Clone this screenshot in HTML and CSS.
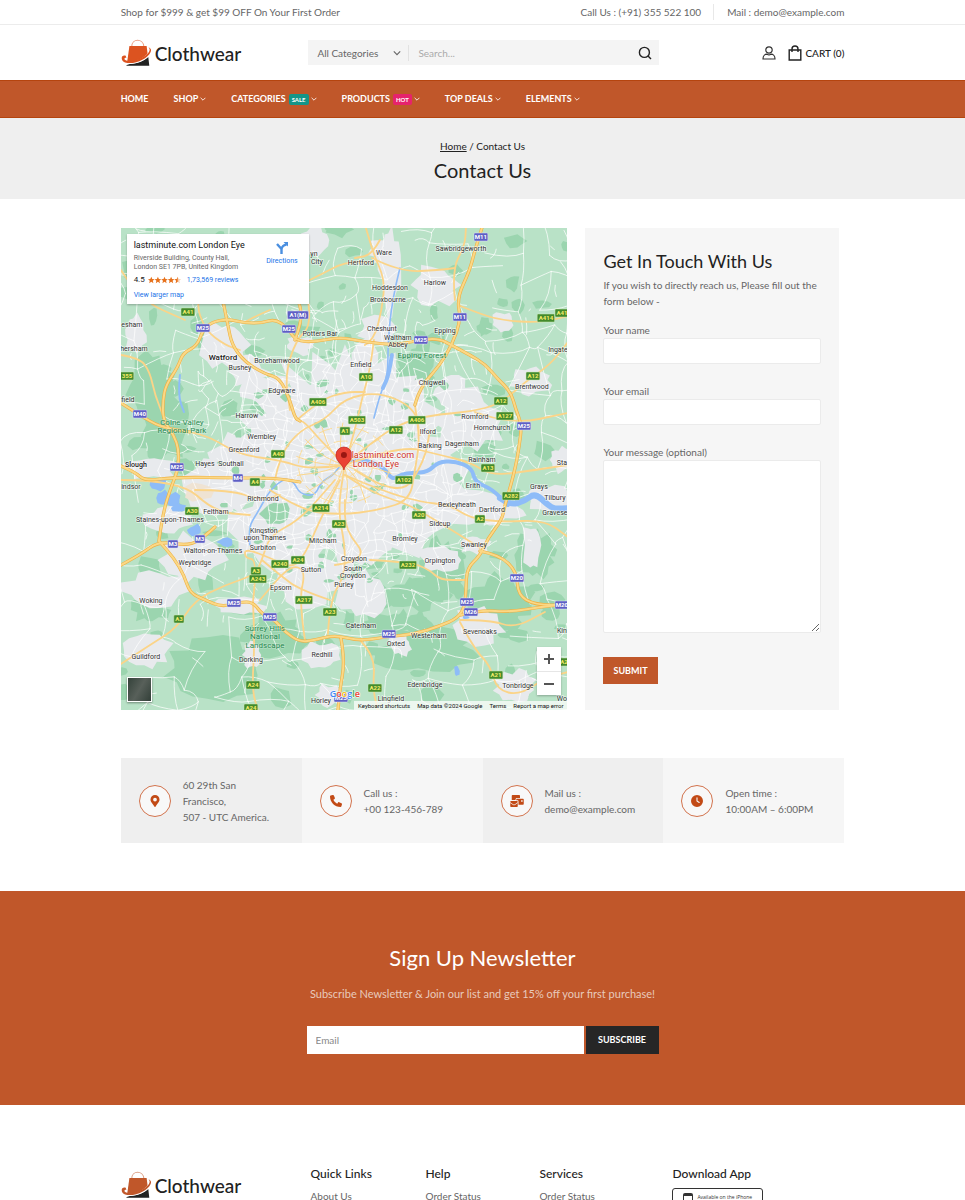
FILE: index.html
```html
<!DOCTYPE html>
<html lang="en">
<head>
<meta charset="utf-8">
<meta name="viewport" content="width=device-width, initial-scale=1">
<title>Contact Us - Clothwear</title>
<link rel="stylesheet" href="styles.css">
</head>
<body>
<svg class="sprite" aria-hidden="true">
  <symbol id="bag-logo" viewBox="30 115 95 82">
    <path d="M62 137c0-25 34-25 36 0" fill="none" stroke="currentColor" stroke-width="3" opacity=".55"/>
    <path d="M55 135h51l4 31c-15 12-34 19-62 19z" fill="currentColor"/>
    <path d="M62 188c20-2 37-9 49-20l3 26H45c3-4 9-5 17-6z" fill="#222"/>
    <path d="M45 164c-17-4-15 18-1 23 26 7 70-11 76-35 2-6-1-11-6-13 2 4 1 9-2 14-11 20-50 33-68 27-5-2-7-9 1-9z" fill="#fff"/>
    <path d="M44 164c-16-4-15 16-2 20 25 8 67-9 76-31 3-7 0-12-7-14 5 4 5 8 2 14-11 17-50 31-68 25-6-2-7-8 1-8z" fill="currentColor"/>
  </symbol>
  <symbol id="chev" viewBox="0 0 10 10"><path d="M1 3l4 4 4-4" fill="none" stroke="currentColor" stroke-width="1.4"/></symbol>
</svg>

<div class="topbar">
  <div class="container topbar-row">
    <span>Shop for $999 &amp; get $99 OFF On Your First Order</span>
    <div class="topbar-contact">
      <span>Call Us : (+91) 355 522 100</span>
      <span class="topbar-mail">Mail : demo@example.com</span>
    </div>
  </div>
</div>

<header class="container header">
  <a class="logo" href="#"><svg aria-hidden="true"><use href="#bag-logo"/></svg><span>Clothwear</span></a>
  <form class="search">
    <select aria-label="Category"><option>All Categories</option></select>
    <svg class="select-arrow" aria-hidden="true"><use href="#chev"/></svg>
    <input type="search" placeholder="Search..." aria-label="Search">
    <button type="button" aria-label="Search"><svg viewBox="0 0 14 14" width="14" height="14" fill="none" stroke="#222" stroke-width="1.4"><circle cx="6.4" cy="6.4" r="5"/><path d="M10 10l3 3"/></svg></button>
  </form>
  <div class="account">
    <a href="#" aria-label="Account"><svg viewBox="0 0 14 14" width="14" height="14" fill="none" stroke="#333" stroke-width="1.2"><circle cx="7" cy="4" r="3.2"/><path d="M1 13c0-3 2-4.800 4-4.800 1.300.8 2.700.8 4 0 2 0 4 1.800 4 4.800z"/></svg></a>
    <a class="cart" href="#"><svg viewBox="0 0 14 16" width="14" height="16" fill="none" stroke="#222" stroke-width="1.400"><path d="M1.200 5h11.600v10H1.200zM4 7V4c0-4 6-4 6 0v3"/></svg>CART (0)</a>
  </div>
</header>

<nav class="nav">
  <div class="container nav-row">
    <a href="#">HOME</a>
    <a href="#">SHOP<svg><use href="#chev"/></svg></a>
    <a href="#">CATEGORIES<span class="tag sale">SALE</span><svg><use href="#chev"/></svg></a>
    <a href="#">PRODUCTS<span class="tag hot">HOT</span><svg><use href="#chev"/></svg></a>
    <a href="#">TOP DEALS<svg><use href="#chev"/></svg></a>
    <a href="#">ELEMENTS<svg><use href="#chev"/></svg></a>
  </div>
</nav>

<section class="banner">
  <p><a href="#">Home</a> / Contact Us</p>
  <h1>Contact Us</h1>
</section>

<main class="container">
  <div class="contact">
    <div class="map">
      <svg id="map" class="map-canvas" viewBox="121 228 447 482" preserveAspectRatio="xMidYMid slice" role="img" aria-label="Map of London"></svg>
      <div class="place">
        <div class="place-text">
          <strong>lastminute.com London Eye</strong>
          <span class="place-address">Riverside Building, County Hall,<br>London SE1 7PB, United Kingdom</span>
          <span class="rating">4.5 <svg viewBox="0 0 50 10" width="33" height="8" fill="#e7711b"><path id="star" d="M5 0l1.500 3.400 3.500.3-2.700 2.400.9 3.700L5 7.800 1.800 9.800l.9-3.700L0 3.700l3.500-.3z"/><use href="#star" x="10"/><use href="#star" x="20"/><use href="#star" x="30"/><use href="#star" x="40" opacity=".35"/><path d="M45 0v7.800l-3.200 2 .9-3.700L40 3.700l3.500-.3z"/></svg> <a href="#">1,73,569 reviews</a></span>
          <a href="#">View larger map</a>
        </div>
        <a class="directions" href="#"><svg viewBox="0 0 12 12" width="12" height="12" fill="none" stroke="#4a8fe0" stroke-width="2.400"><path d="M5.500 12V7.500C5.500 5 8 3 10.500 2.500M1 2l4.500 5"/><path d="M7.500 0H12v4.500z" fill="#4a8fe0" stroke="none"/></svg>Directions</a>
      </div>
      <button class="satellite" type="button" aria-label="Satellite view"></button>
      <span class="google" aria-label="Google"><i class="b">G</i><i class="r">o</i><i class="y">o</i><i class="b">g</i><i class="g">l</i><i class="r">e</i></span>
      <div class="zoom"><button type="button" aria-label="Zoom in"><svg viewBox="0 0 12 12"><path d="M6 1v10M1 6h10"/></svg></button><button type="button" aria-label="Zoom out"><svg viewBox="0 0 12 12"><path d="M1 6h10"/></svg></button></div>
      <div class="legal"><span>Keyboard shortcuts</span><span>Map data ©2024 Google</span><span>Terms</span><span>Report a map error</span></div>
    </div>
    <form class="form">
      <h2>Get In Touch With Us</h2>
      <p>If you wish to directly reach us, Please fill out the form below -</p>
      <label for="name">Your name</label>
      <input id="name" type="text">
      <label for="email">Your email</label>
      <input id="email" type="email">
      <label for="message">Your message (optional)</label>
      <textarea id="message"></textarea>
      <button type="button">SUBMIT</button>
    </form>
  </div>

  <div class="info">
    <div class="info-item">
      <span class="ring"><svg viewBox="0 0 384 512"><path d="M172 502C27 291 0 270 0 192a192 192 0 0 1 384 0c0 78-27 99-172 310-10 13-30 13-40 0zM192 272a80 80 0 1 0 0-160 80 80 0 0 0 0 160z"/></svg></span>
      <p>60 29th San Francisco,<br>507 - UTC America.</p>
    </div>
    <div class="info-item">
      <span class="ring"><svg viewBox="0 0 512 512"><path d="M165 25c-8-19-29-29-48-24L29 25C12 30 0 46 0 64c0 247 201 448 448 448 18 0 34-12 39-29l24-88c5-19-5-40-24-48l-96-40c-16-7-35-2-46 12l-40 49c-71-33-128-90-161-161l49-40c14-11 19-30 12-46z"/></svg></span>
      <p>Call us :<br>+00 123-456-789</p>
    </div>
    <div class="info-item">
      <span class="ring"><svg class="wide" viewBox="0 0 576 512"><path d="M64 40c0-22 18-40 40-40h272c22 0 40 18 40 40v88H288c-35 0-64 29-64 64v16H64zM256 192c0-18 14-32 32-32h256c18 0 32 14 32 32v192c0 18-14 32-32 32H352V272c0-25-15-46-40-46h-56zm208 32v64h64v-64zM0 286c0-17 14-30 30-30h260c16 0 30 13 30 30v20L180 402c-12 8-28 8-40 0L0 306zm0 56l122 84c23 16 53 16 76 0l122-84v140c0 16-14 30-30 30H30c-16 0-30-14-30-30z"/></svg></span>
      <p>Mail us :<br>demo@example.com</p>
    </div>
    <div class="info-item">
      <span class="ring"><svg viewBox="0 0 512 512"><path fill-rule="evenodd" d="M256 0a256 256 0 1 1 0 512 256 256 0 0 1 0-512zm-24 120v136c0 8 4 16 11 20l96 64c26 15 45-19 26-40l-85-57V120c0-30-48-30-48 0z"/></svg></span>
      <p>Open time :<br>10:00AM – 6:00PM</p>
    </div>
  </div>
</main>

<section class="newsletter">
  <h2>Sign Up Newsletter</h2>
  <p>Subscribe Newsletter &amp; Join our list and get 15% off your first purchase!</p>
  <form><input type="email" placeholder="Email" aria-label="Email"><button type="button">SUBSCRIBE</button></form>
</section>

<footer class="container footer">
  <a class="logo footer-logo" href="#"><svg aria-hidden="true"><use href="#bag-logo"/></svg><span>Clothwear</span></a>
  <div><h3>Quick Links</h3><a href="#">About Us</a></div>
  <div><h3>Help</h3><a href="#">Order Status</a></div>
  <div><h3>Services</h3><a href="#">Order Status</a></div>
  <div><h3>Download App</h3><a class="store" href="#"><svg viewBox="0 0 10 14" width="10" height="14"><rect width="10" height="14" rx="2" fill="#333"/><path d="M1 3h8v7H1z" fill="#fff"/></svg><span>Available on the iPhone</span></a></div>
</footer>
<script src="map.js"></script>
</body>
</html>
```
FILE: styles.css
```css
* { box-sizing: border-box; }
body { margin: 0; background: #fff; color: #666; font: 10px/16px Lato, "Liberation Sans", sans-serif; }
h1, h2, h3, p { margin: 0; font-weight: 400; }
h1, h2, h3 { color: #222; }
a { color: inherit; text-decoration: none; }
button, input, select, textarea { font: inherit; color: inherit; border: 0; border-radius: 0; padding: 0; }
button { cursor: pointer; }
.sprite { position: absolute; width: 0; height: 0; }
.container { width: 75%; margin: 0 auto; }

.topbar { border-bottom: 1px solid #ececec; }
.topbar-row { display: flex; justify-content: space-between; align-items: center; height: 24px; }
.topbar-contact { display: flex; }
.topbar-mail { margin-left: 12px; padding-left: 13px; border-left: 1px solid #e8e8e8; }

.header { display: flex; align-items: center; justify-content: space-between; height: 55px; }
.logo { display: flex; align-items: center; gap: 2px; color: #dc5320; }
.logo svg { width: 32px; height: 28px; }
.logo span { color: #222; font-size: 19px; line-height: 28px; font-weight: 500; padding-top: 3px; }
.search { display: flex; align-items: center; width: 351px; height: 25px; margin-left: -36px; background: #f4f4f4; position: relative; }
.search select { appearance: none; width: 101px; height: 16px; padding-left: 9px; background: none; border-right: 1px solid #e2e2e2; }
.select-arrow { position: absolute; left: 85px; top: 9px; width: 8px; height: 8px; pointer-events: none; }
.search input { flex: 1; min-width: 0; padding: 0 9px; background: none; outline: 0; }
.search input::placeholder { color: #aaa; }
.search button { width: 28px; height: 25px; background: none; padding-top: 4px; }
.account { display: flex; align-items: center; gap: 12px; color: #222; font-weight: 500; }
.account svg { display: block; }
.cart { display: flex; align-items: center; gap: 3px; }

.nav { background: #c0572a; border-top: 1px solid #b5440e; border-bottom: 1px solid #b5440e; color: #fff; font-weight: 700; font-size: 9px; }
.nav-row { display: flex; gap: 25px; align-items: center; height: 36px; }
.nav-row a { display: flex; align-items: center; }
.nav-row svg { width: 6px; height: 6px; margin-left: 2px; }
.tag { margin-left: 3px; padding: 0 3px; border-radius: 2px; font-size: 6px; line-height: 11px; }
.sale { background: #159588; }
.hot { background: #e6236c; }

.banner { padding: 20px 0 13px; background: #efefef; text-align: center; color: #222; }
.banner a { text-decoration: underline; }
.banner h1 { font-size: 20px; line-height: 32px; }

.contact { display: grid; grid-template-columns: 447fr 254fr; gap: 18px; margin-top: 29px; padding-right: 5px; }
.map { position: relative; overflow: hidden; font-family: Roboto, sans-serif; min-height: 482px; }
.map-canvas { position: absolute; inset: 0; width: 100%; height: 100%; }
.map-canvas text { text-anchor: middle; }
.place { position: absolute; left: 6px; top: 6px; width: 182px; height: 70px; padding: 6px 11px 4px 7px; display: flex; justify-content: space-between; background: #fff; box-shadow: 0 1px 2px #0004; font-size: 7px; line-height: 9px; white-space: nowrap; }
.place-text { display: flex; flex-direction: column; }
.place strong { color: #111; font-size: 9px; line-height: 10px; font-weight: 400; }
.place-address { margin-top: 4px; }
.place a { color: #1a73e8; }
.rating { display: flex; align-items: center; gap: 3px; margin: 2px 0 5px; font-size: 8px; line-height: 12px; color: #222; }
.rating a { font-size: 7px; margin-left: 3px; }
.directions { display: flex; flex-direction: column; align-items: center; gap: 3px; padding-top: 2px; }
.satellite { position: absolute; left: 6px; bottom: 8px; width: 25px; height: 25px; border: 1px solid #fff; background: linear-gradient(120deg, #34423a, #58605a 50%, #323f38); box-shadow: 0 1px 2px #0006; }
.google { position: absolute; left: 209px; bottom: 8px; font: 600 9px/16px "Open Sans", sans-serif; }
.google i { font-style: normal; -webkit-text-stroke: 1px #fff; paint-order: stroke; }
.google .b { color: #4285f4; } .google .r { color: #ea4335; } .google .y { color: #fbbc05; } .google .g { color: #34a853; }
.zoom { position: absolute; right: 6px; bottom: 15px; width: 24px; background: #fff; box-shadow: 0 1px 2px #0004; }
.zoom button { display: grid; place-items: center; width: 100%; height: 24px; background: none; }
.zoom button + button { border-top: 1px solid #e6e6e6; }
.zoom svg { width: 12px; height: 12px; stroke: #555; stroke-width: 2; }
.legal { position: absolute; right: 0; bottom: 0; display: flex; gap: 7px; padding: 0 4px; background: #ffffffb8; color: #111; font-size: 6px; line-height: 9px; }

.form { display: flex; flex-direction: column; align-items: flex-start; padding: 22px 18px 25px; background: #f6f6f6; }
.form h2 { font-size: 18px; line-height: 22px; margin-bottom: 5px; }
.form p { margin-bottom: 13px; }
.form input, .form textarea { width: 100%; background: #fff; border: 1px solid #ebebeb; border-radius: 2px; margin-bottom: 19px; }
.form input { height: 26px; }
.form textarea { height: 173px; margin-bottom: 24px; resize: vertical; }
.form button { padding: 0 10px; height: 27px; background: #c0572a; color: #fff; font-size: 9px; font-weight: 700; }

.info { display: grid; grid-template-columns: repeat(4, 1fr); margin-top: 48px; }
.info-item { display: flex; align-items: center; gap: 12px; min-height: 85px; padding: 0 18px; background: #f6f6f6; }
.info-item:nth-child(odd) { background: #efefef; }
.ring { flex: none; display: grid; place-items: center; width: 32px; height: 32px; border: 1px solid #d2734d; border-radius: 50%; background: #f8f8f8; }
.ring svg { width: 12px; height: 12px; fill: #c24a16; }
.ring .wide { width: 14px; }
.info-item p { min-width: 0; }
.info-item:first-child p { padding-right: 10px; }

.newsletter { margin-top: 48px; padding: 52px 0 51px; background: #c0572a; text-align: center; color: #e8cabc; }
.newsletter h2 { color: #fff; font-size: 22px; line-height: 30px; margin-bottom: 13px; }
.newsletter p { font-size: 11px; }
.newsletter form { display: flex; justify-content: center; gap: 2px; margin-top: 24px; }
.newsletter input { width: 277px; height: 28px; padding: 0 9px; background: #fff; }
.newsletter input::placeholder { color: #888; }
.newsletter button { width: 73px; height: 28px; background: #262626; color: #fff; font-size: 9px; font-weight: 700; }

.footer { display: grid; grid-template-columns: 190fr 115fr 114fr 133fr 172fr; padding: 59px 0 32px; }
.footer h3 { font-size: 12px; line-height: 20px; font-weight: 500; margin-bottom: 4px; }
.footer-logo { align-self: start; margin-top: 5px; color: #c0572a; }
.store { display: flex; gap: 4px; width: 91px; height: 26px; padding: 4px 10px; border: 1px solid #333; border-radius: 3px; font: 5px/8px "Open Sans", sans-serif; color: #333; white-space: nowrap; }
```
FILE: map.js
```js
(function () {
  const map = document.getElementById("map");
  let seed = 7;
  const rnd = () => (seed = (seed * 16807) % 2147483647) / 2147483647;
  const out = [];
  const path = (d, stroke, width, extra) =>
    out.push(`<path d="${d}" fill="none" stroke="${stroke}" stroke-width="${width}" stroke-linejoin="round" stroke-linecap="round" ${extra || ""}/>`);

  // Irregular patch of land around a centre.
  function blob(x, y, rx, ry, fill, steps) {
    const n = steps || 16;
    const pts = [];
    for (let i = 0; i < n; i++) {
      const a = (i / n) * Math.PI * 2;
      const k = 0.65 + rnd() * 0.5;
      pts.push((x + Math.cos(a) * rx * k).toFixed(1) + "," + (y + Math.sin(a) * ry * k).toFixed(1));
    }
    out.push(`<polygon points="${pts.join(" ")}" fill="${fill}"/>`);
  }

  // Smooth curve through a list of points.
  function curve(p) {
    let d = `M${p[0]} ${p[1]}`;
    for (let i = 2; i < p.length - 2; i += 2) {
      d += `Q${p[i]} ${p[i + 1]} ${(p[i] + p[i + 2]) / 2} ${(p[i + 1] + p[i + 3]) / 2}`;
    }
    return d + `L${p[p.length - 2]} ${p[p.length - 1]}`;
  }

  const land = "#b9e2c7", wood = "#9bd5af", town = "#e8eaed";
  out.push(`<rect x="121" y="228" width="447" height="482" fill="${land}"/>`);
  for (let i = 0; i < 120; i++) blob(121 + rnd() * 447, 228 + rnd() * 482, 4 + rnd() * 10, 3 + rnd() * 8, wood, 9);
  [[150, 385, 24, 34], [165, 425, 24, 38], [215, 668, 55, 32], [275, 635, 35, 22], [425, 650, 55, 22], [500, 600, 34, 26],
   [145, 270, 22, 26], [415, 372, 22, 22], [415, 595, 34, 16], [535, 555, 20, 26], [150, 610, 20, 14], [210, 345, 14, 18],
   [385, 625, 26, 12], [440, 570, 22, 34]].forEach(b => blob(...b, wood, 22));

  // Built-up areas.
  blob(345, 455, 118, 100, town, 48);
  blob(345, 470, 98, 116, town, 40);
  [[225, 345, 24, 26], [247, 372, 22, 16], [245, 470, 36, 46], [210, 485, 38, 28], [150, 468, 30, 12], [470, 420, 40, 30],
   [445, 505, 54, 26], [495, 510, 30, 14], [550, 500, 26, 14], [435, 285, 26, 22], [390, 270, 12, 46], [383, 250, 16, 14],
   [378, 330, 20, 16], [533, 380, 22, 16], [503, 322, 12, 10], [365, 385, 18, 50], [265, 530, 36, 40], [190, 560, 34, 26],
   [155, 590, 34, 20], [148, 650, 24, 18], [305, 580, 40, 26], [360, 595, 26, 24], [480, 625, 26, 20], [322, 655, 20, 14],
   [252, 655, 9, 14], [515, 685, 22, 16], [330, 695, 14, 12], [135, 335, 12, 20], [475, 545, 16, 10], [440, 560, 24, 14],
   [532, 545, 10, 24], [400, 645, 12, 12], [560, 460, 12, 14], [300, 345, 16, 10], [170, 520, 26, 14], [315, 240, 14, 18],
   [270, 390, 28, 18], [240, 606, 26, 10], [455, 395, 20, 18]].forEach(b => blob(...b, town, 18));

  // Parks inside the city.
  for (let i = 0; i < 80; i++) {
    const a = rnd() * 6.28, r = 26 + rnd() * 102;
    blob(345 + Math.cos(a) * r, 465 + Math.sin(a) * r, 2 + rnd() * 4, 2 + rnd() * 3, wood, 8);
  }
  blob(277, 514, 16, 14, wood, 14);
  blob(198, 492, 15, 9, "#efe3d3", 10);

  // Side streets: a loose grid everywhere, a tight one over the city.
  function streets(step, density, width) {
    const cols = Math.ceil(460 / step), rows = Math.ceil(500 / step), node = [];
    for (let r = 0; r <= rows; r++) {
      node.push([]);
      for (let c = 0; c <= cols; c++) node[r].push([115 + c * step + (rnd() - 0.5) * step * 0.9, 222 + r * step + (rnd() - 0.5) * step * 0.9]);
    }
    let d = "";
    const link = (a, b) => {
      const mx = (a[0] + b[0]) / 2, my = (a[1] + b[1]) / 2;
      if (rnd() < density(mx, my)) {
        d += `M${a[0].toFixed(1)} ${a[1].toFixed(1)}Q${(mx + (rnd() - 0.5) * step * 0.5).toFixed(1)} ${(my + (rnd() - 0.5) * step * 0.5).toFixed(1)} ${b[0].toFixed(1)} ${b[1].toFixed(1)}`;
      }
    };
    for (let r = 0; r < rows; r++) for (let c = 0; c < cols; c++) {
      link(node[r][c], node[r][c + 1]);
      link(node[r][c], node[r + 1][c]);
    }
    path(d, "#fff", width, 'opacity=".8"');
  }
  const reach = (x, y) => Math.hypot((x - 345) / 1.1, y - 460);
  streets(27, () => 0.66, 0.9);
  streets(10, (x, y) => (reach(x, y) < 112 ? 0.8 : reach(x, y) < 165 ? 0.26 : 0.03), 0.9);

  // Water.
  const water = "#8ebcf8";
  path(curve([340, 462, 362, 458, 385, 468, 392, 480, 402, 474, 412, 473, 428, 472, 438, 462, 455, 461, 472, 468, 475, 482, 492, 489, 508, 505]), water, 4);
  path(curve([500, 498, 510, 505, 525, 501, 535, 493, 548, 505, 555, 509, 570, 508]), water, 6);
  path(curve([250, 545, 248, 528, 258, 512, 270, 490, 285, 478, 294, 482, 300, 494, 315, 496, 321, 482, 335, 474, 342, 462]), water, 1.6);
  path(curve([400, 268, 392, 300, 388, 345, 388, 375, 380, 395, 374, 418]), water, 1.6);
  path(curve([392, 355, 389, 375, 383, 388]), water, 4);
  path(curve([180, 375, 178, 395, 184, 412]), water, 2);
  [[158, 485, 9, 7], [172, 500, 11, 8], [180, 508, 8, 5], [195, 530, 8, 6], [225, 542, 8, 5], [457, 671, 3, 6], [163, 498, 6, 8], [466, 617, 4, 2]].forEach(b => blob(...b, water, 10));

  // Main roads, then motorways.
  const A = [
    [121, 664, 150, 645, 177, 628, 195, 600, 225, 585, 255, 575, 262, 560, 270, 535, 300, 520, 335, 480],
    [460, 622, 475, 650, 490, 665, 497, 690, 520, 695, 545, 678, 568, 672], [360, 640, 375, 655, 373, 690, 378, 710],
    [253, 602, 255, 640, 252, 690, 258, 710], [253, 602, 258, 560, 245, 558, 245, 548, 275, 560, 292, 568, 305, 555, 320, 520, 340, 480],
    [305, 640, 299, 600, 306, 570, 290, 565, 260, 600], [328, 634, 330, 600, 345, 575, 345, 545, 338, 510, 344, 470],
    [365, 345, 374, 340, 382, 310, 385, 280, 374, 255, 366, 228], [345, 465, 355, 430, 363, 395, 370, 370, 374, 340],
    [345, 465, 380, 435, 410, 420, 440, 414, 470, 412, 500, 404, 525, 382, 550, 365, 568, 342],
    [372, 258, 400, 272, 440, 270, 455, 268], [458, 305, 475, 312, 500, 320, 540, 323, 568, 316],
    [345, 465, 400, 445, 440, 455, 470, 462, 492, 476, 535, 470, 568, 465],
    [345, 475, 380, 490, 420, 502, 450, 505, 470, 518, 500, 522, 545, 520, 568, 537],
    [345, 475, 370, 492, 410, 505, 435, 520, 460, 535, 480, 548], [370, 560, 410, 562, 430, 570, 440, 580, 465, 580],
    [345, 465, 320, 440, 305, 422, 297, 420], [345, 465, 310, 470, 280, 460, 240, 455, 210, 437, 190, 432],
    [270, 490, 300, 510, 340, 515, 380, 510, 410, 500, 415, 470, 420, 440, 415, 405],
    [275, 480, 280, 455, 300, 430, 325, 420, 345, 398, 380, 392, 415, 408, 420, 435],
    [297, 420, 320, 400, 345, 392, 365, 392], [121, 355, 140, 358, 150, 372, 155, 395, 165, 420],
    [205, 260, 195, 300, 205, 330, 225, 345, 240, 350], [121, 270, 140, 300, 185, 320], [270, 310, 258, 315, 245, 322],
    [300, 285, 320, 275, 345, 262, 370, 262], [308, 300, 312, 325, 296, 340, 285, 375, 290, 410],
    [330, 600, 300, 590, 280, 575, 262, 560], [195, 490, 230, 490, 260, 500, 280, 495], [475, 412, 510, 425, 568, 413],
    [460, 620, 490, 620, 515, 628, 545, 612], [121, 480, 180, 480, 215, 512, 250, 515], [335, 565, 370, 560, 345, 530, 345, 500],
    [355, 470, 400, 500, 425, 460, 430, 430], [455, 300, 452, 270, 465, 245, 466, 228], [380, 240, 372, 255, 355, 258]
  ];
  A.forEach(p => path(curve(p), "#fbd488", 1.8));
  [[344, 465, 12], [344, 465, 24], [344, 465, 38]].forEach(c => out.push(`<ellipse cx="${c[0]}" cy="${c[1]}" rx="${c[2] * 1.2}" ry="${c[2]}" fill="none" stroke="#fbdd9c" stroke-width="1" stroke-dasharray="14 5"/>`));
  for (let i = 0; i < 14; i++) {
    const a = i * 0.449;
    path(curve([344, 465, 344 + Math.cos(a) * 22, 465 + Math.sin(a) * 16, 344 + Math.cos(a + 0.2) * 48, 465 + Math.sin(a + 0.2) * 42]), "#fbd78c", 1);
  }
  const M = [
    [159, 541, 163, 512, 172, 485, 178, 470, 179, 450, 174, 435, 163, 420, 163, 400, 166, 385, 178, 367, 183, 353, 197, 346, 203, 330, 212, 322, 228, 319, 245, 323, 262, 323, 275, 319, 288, 328, 296, 341, 315, 342, 340, 337, 365, 342, 395, 345, 415, 341, 438, 338, 453, 346, 470, 355, 485, 364, 497, 378, 511, 392, 516, 410, 522, 425, 519, 448, 516, 465, 511, 485, 505, 505, 502, 520, 488, 538, 480, 556, 467, 568, 466, 590, 465, 606, 458, 618, 440, 626, 415, 634, 385, 637, 360, 641, 335, 635, 315, 640, 300, 642, 285, 632, 275, 620, 262, 614, 253, 602, 240, 602, 222, 607, 205, 600, 190, 593, 184, 575, 174, 558, 159, 541],
    [482, 228, 475, 250, 470, 270, 457, 298, 461, 320, 452, 345, 440, 365, 425, 382, 418, 395, 415, 405],
    [222, 296, 228, 325, 232, 345, 245, 362, 265, 374, 280, 378, 290, 400, 295, 418, 300, 421], [121, 403, 140, 415, 160, 427, 190, 432],
    [121, 466, 135, 472, 145, 481, 175, 477, 240, 478, 275, 478, 300, 482], [121, 565, 140, 555, 159, 541, 190, 546, 205, 536, 215, 527],
    [480, 551, 500, 555, 517, 572, 518, 595, 535, 605, 568, 605], [461, 615, 480, 610, 510, 612, 540, 607, 568, 604],
    [341, 638, 345, 660, 340, 690, 338, 710], [295, 340, 302, 322, 300, 302, 290, 290]
  ];
  M.forEach(p => path(curve(p), "#eeb043", 3.2));
  M.forEach(p => path(curve(p), "#fbd886", 2));

  // Place names: x centre, y baseline, text.
  const towns = [
    [384, 255, "Ware"], [361, 265, "Hertford"], [461, 251, "Sawbridgeworth"], [435, 285, "Harlow"], [390, 290, "Hoddesdon"], [388, 302, "Broxbourne"],
    [314, 256, "yn"], [317, 264, "City"], [382, 331, "Cheshunt"], [398, 340, "Waltham"], [398, 347, "Abbey"], [445, 333, "Epping"], [320, 336, "Potters Bar"],
    [558, 352, "Ingate"], [277, 363, "Borehamwood"], [240, 370, "Bushey"], [361, 367, "Enfield"], [282, 393, "Edgware"], [432, 385, "Chigwell"], [532, 389, "Brentwood"],
    [132, 327, "esham"], [134, 351, "hersham"], [128, 402, "field"], [247, 418, "Harrow"], [475, 419, "Romford"], [492, 430, "Hornchurch"], [428, 434, "Ilford"],
    [262, 439, "Wembley"], [430, 448, "Barking"], [462, 446, "Dagenham"], [244, 452, "Greenford"], [482, 462, "Rainham"], [205, 466, "Hayes"], [231, 466, "Southall"],
    [131, 489, "indsor"], [263, 501, "Richmond"], [473, 488, "Erith"], [539, 489, "Grays"], [555, 500, "Tilbury"], [555, 515, "Gravese"], [216, 514, "Feltham"],
    [457, 507, "Bexleyheath"], [492, 512, "Dartford"], [170, 522, "Staines-upon-Thames"], [440, 526, "Sidcup"], [264, 533, "Kingston"], [265, 540, "upon Thames"],
    [263, 550, "Surbiton"], [323, 543, "Mitcham"], [405, 541, "Bromley"], [474, 547, "Swanley"], [213, 553, "Walton-on-Thames"], [195, 565, "Weybridge"],
    [354, 561, "Croydon"], [440, 563, "Orpington"], [353, 571, "South"], [353, 578, "Croydon"], [344, 587, "Purley"], [311, 572, "Sutton"], [281, 590, "Epsom"],
    [151, 603, "Woking"], [361, 628, "Caterham"], [429, 638, "Westerham"], [480, 634, "Sevenoaks"], [396, 646, "Oxted"], [562, 633, "Kin"], [562, 465, "Sta"],
    [146, 659, "Guildford"], [251, 662, "Dorking"], [322, 657, "Redhill"], [425, 687, "Edenbridge"], [518, 688, "Tonbridge"], [391, 701, "Lingfield"], [321, 703, "Horley"], [562, 701, "Wo"]
  ];
  const label = (x, y, t, fill, size, weight, halo) =>
    out.push(`<text x="${x}" y="${y}" fill="${fill}" font-size="${size}" font-weight="${weight || 400}" stroke="#fff" stroke-opacity="${halo || 0.6}" stroke-width="1.5" paint-order="stroke">${t}</text>`);
  towns.forEach(t => label(t[0], t[1], t[2], "#333", 7));
  label(223, 360, "Watford", "#222", 8, 500);
  label(136, 467, "Slough", "#222", 7, 500);
  [[182, 425, "Colne Valley"], [182, 433, "Regional Park"], [422, 358, "Epping Forest"], [265, 631, "Surrey Hills"], [265, 639, "National"], [265, 648, "Landscape"]]
    .forEach(t => label(t[0], t[1], t[2], "#2a8a52", 8, 400, 0.25));

  // Road shields.
  const shields = [
    [481, 237, "M11"], [460, 317, "M11"], [298, 315, "A1(M)"], [289, 329, "M25"], [203, 328, "M25"], [421, 340, "M25"], [140, 414, "M40"], [177, 467, "M25"],
    [524, 426, "M25"], [238, 478, "M4"], [173, 544, "M3"], [200, 539, "M3"], [234, 603, "M25"], [270, 617, "M25"], [517, 578, "M20"], [467, 602, "M25"], [471, 612, "M26"],
    [389, 634, "M25"], [562, 605, "M20"], [341, 698, "M23"], [188, 312, "A41"], [546, 318, "A414"], [562, 313, "A41"], [366, 377, "A10"], [533, 376, "A12"],
    [501, 401, "A12"], [505, 416, "A127"], [318, 402, "A406"], [357, 420, "A503"], [345, 431, "A1"], [396, 430, "A12"], [417, 420, "A406"], [278, 454, "A40"],
    [488, 468, "A13"], [404, 480, "A102"], [255, 482, "A4"], [192, 511, "A30"], [321, 508, "A214"], [339, 524, "A23"], [511, 496, "A282"], [419, 515, "A20"],
    [480, 519, "A2"], [298, 560, "A24"], [280, 564, "A240"], [256, 571, "A3"], [258, 579, "A243"], [408, 565, "A232"], [304, 600, "A217"], [330, 612, "A23"],
    [179, 619, "A3"], [253, 685, "A24"], [375, 688, "A22"], [496, 675, "A21"], [127, 376, "355"], [251, 708, "A24"], [564, 662, "A2"]
  ];
  shields.forEach(s => {
    const blue = s[2][0] === "M" || s[2] === "A1(M)", w = s[2].length * 3.6 + 3;
    out.push(`<rect x="${s[0] - w / 2}" y="${s[1] - 4}" width="${w}" height="8" rx="1" fill="${blue ? "#5e5fc4" : "#438a2c"}" stroke="${blue ? "#dcdcf8" : "#cfe8bb"}" stroke-width=".5"/>
      <text x="${s[0]}" y="${s[1] + 2}" font-size="6" font-weight="700" fill="${blue ? "#fff" : "#f4ec6a"}">${s[2]}</text>`);
  });

  // Marker.
  out.push('<path d="M344 470c-1-6-8-8-8-15a8 8 0 0 1 16 0c0 7-7 9-8 15z" fill="#ea4335" stroke="#b31412" stroke-width=".6"/><circle cx="344" cy="455" r="3" fill="#9a1712"/>');
  label(383, 458, "lastminute.com", "#d0342c", 9);
  label(376, 467, "London Eye", "#d0342c", 9);
  map.innerHTML = out.join("");
})();
```
